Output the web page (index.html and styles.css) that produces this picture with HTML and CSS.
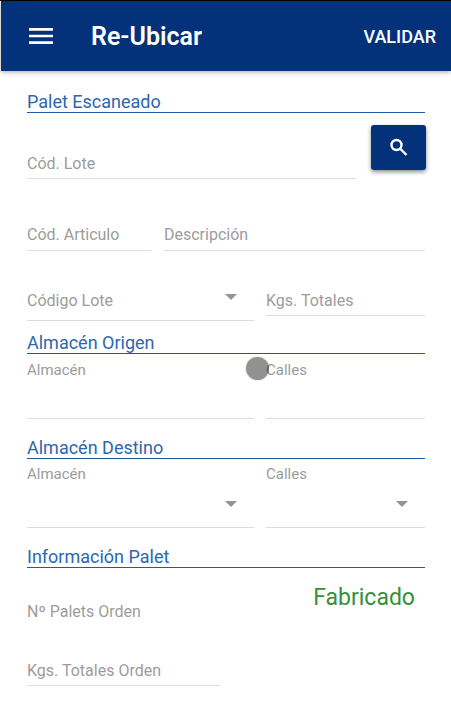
FILE: index.html
```html
<!DOCTYPE html>
<html lang="es">
<head>
  <meta charset="utf-8">
  <meta name="viewport" content="width=device-width, initial-scale=1">
  <title>Re-Ubicar</title>
  <link rel="stylesheet" href="styles.css">
</head>
<body>
  <header class="toolbar">
    <button class="menu-button" type="button" aria-label="Menú">
      <svg viewBox="0 0 24 24" width="32" height="32" fill="currentColor" aria-hidden="true"><path d="M3 18h18v-2H3v2zm0-5h18v-2H3v2zm0-7v2h18V6H3z"/></svg>
    </button>
    <h1 class="title">Re-Ubicar</h1>
    <button class="validate" type="button">VALIDAR</button>
  </header>

  <main class="content">
    <section>
      <h2 class="heading">Palet Escaneado</h2>
      <div class="row row-scan">
        <div class="field">
          <label for="cod-lote">Cód. Lote</label>
          <input id="cod-lote" type="text">
        </div>
        <button class="search" type="button" aria-label="Buscar">
          <svg viewBox="0 0 24 24" width="24" height="24" fill="none" stroke="currentColor" stroke-width="2.400" aria-hidden="true"><circle cx="9.500" cy="9" r="5"/><path d="M13 12.500l6.500 6.500"/></svg>
        </button>
      </div>
      <div class="row row-article">
        <div class="field">
          <label for="cod-articulo">Cód. Articulo</label>
          <input id="cod-articulo" type="text">
        </div>
        <div class="field">
          <label for="descripcion">Descripción</label>
          <input id="descripcion" type="text">
        </div>
      </div>
      <div class="row row-lot">
        <div class="field field-select">
          <label for="codigo-lote">Código Lote</label>
          <select id="codigo-lote"></select>
          <svg class="arrow" viewBox="0 0 12 6" width="12" height="6" aria-hidden="true"><path d="M0 0h12L6 6z"/></svg>
        </div>
        <div class="field">
          <label for="kgs-totales">Kgs. Totales</label>
          <input id="kgs-totales" type="text">
        </div>
      </div>
    </section>

    <section class="origin">
      <h2 class="heading">Almacén Origen</h2>
      <div class="row row-store">
        <div class="stacked">
          <label for="origen-almacen">Almacén</label>
          <input id="origen-almacen" type="text">
          <span class="touch"></span>
        </div>
        <div class="stacked">
          <label for="origen-calles">Calles</label>
          <input id="origen-calles" type="text">
        </div>
      </div>
    </section>

    <section class="target">
      <h2 class="heading">Almacén Destino</h2>
      <div class="row row-store">
        <div class="stacked stacked-select">
          <label for="destino-almacen">Almacén</label>
          <select id="destino-almacen"></select>
          <svg class="arrow" viewBox="0 0 12 6" width="12" height="6" aria-hidden="true"><path d="M0 0h12L6 6z"/></svg>
        </div>
        <div class="stacked stacked-select">
          <label for="destino-calles">Calles</label>
          <select id="destino-calles"></select>
          <svg class="arrow" viewBox="0 0 12 6" width="12" height="6" aria-hidden="true"><path d="M0 0h12L6 6z"/></svg>
        </div>
      </div>
    </section>

    <section class="info">
      <h2 class="heading">Información Palet</h2>
      <div class="row row-info">
        <div class="totals">
          <div class="field field-plain">
            <label for="palets-orden">Nº Palets Orden</label>
            <input id="palets-orden" type="text">
          </div>
          <div class="field">
            <label for="kgs-orden">Kgs. Totales Orden</label>
            <input id="kgs-orden" type="text">
          </div>
        </div>
        <p class="status">Fabricado</p>
      </div>
    </section>
  </main>
</body>
</html>
```

FILE: styles.css
```css
* {
  box-sizing: border-box;
}

body {
  margin: 0;
  background: #fff;
  border-top: 1px solid #000;
  font-family: Roboto, "Liberation Sans", sans-serif;
  color: #9c9c9c;
}

button,
input,
select {
  font: inherit;
  border: 0;
  padding: 0;
  margin: 0;
  background: none;
  color: inherit;
  border-radius: 0;
  appearance: none;
  min-width: 0;
}

button {
  cursor: pointer;
}

svg {
  display: block;
}

.toolbar {
  display: flex;
  align-items: center;
  height: 70px;
  margin-left: 1px;
  padding: 0 15px 0 24px;
  background: #03327b;
  color: #fff;
  box-shadow: 0 1px 5px rgba(60, 30, 30, 0.4);
}

.title {
  flex: 1;
  margin: 2px 0 0 34px;
  font-size: 25px;
  line-height: 30px;
  font-weight: 600;
}

.validate {
  margin-top: 2px;
  font-size: 18px;
  line-height: 24px;
  font-weight: 500;
}

.content {
  padding: 21px 26px 24px 27px;
}

.heading {
  margin: 0;
  border-bottom: 1px solid #1f5ba3;
  font-size: 18px;
  line-height: 20px;
  font-weight: 400;
  color: #2d67ae;
}

.row {
  display: grid;
  column-gap: 12px;
}

.field {
  display: grid;
  align-items: start;
  font-size: 16px;
  line-height: 20px;
}

.field > * {
  grid-area: 1 / 1;
}

.field input,
.field select {
  width: 100%;
  height: 25px;
  border-bottom: 1px solid #dcdcdc;
}

.field-select select {
  height: 30px;
}

.field-plain input {
  border-bottom-color: transparent;
}

.arrow {
  justify-self: end;
  margin-right: 17px;
  fill: #949494;
  pointer-events: none;
}

.field .arrow {
  margin-top: 3px;
}

.row-scan {
  grid-template-columns: 1fr 54px;
  column-gap: 15px;
  padding-top: 12px;
}

.row-scan .field {
  padding-top: 29px;
}

.search {
  display: flex;
  align-items: center;
  justify-content: center;
  width: 55px;
  height: 45px;
  border-radius: 3px;
  background: #03327b;
  color: #fff;
  box-shadow: 0 2px 4px rgba(0, 0, 0, 0.45);
}

.row-article {
  grid-template-columns: 124fr 261fr;
  column-gap: 13px;
  margin-top: 46px;
}

.row-article .field input {
  height: 26px;
}

.row-lot,
.row-store {
  grid-template-columns: 227fr 159fr;
}

.row-lot {
  align-items: start;
  margin-top: 40px;
}

.origin {
  margin-top: 12px;
}

.target,
.info {
  margin-top: 19px;
}

.row-store {
  padding-top: 7px;
}

.target .row-store {
  padding-top: 6px;
}

.stacked {
  position: relative;
  display: grid;
  font-size: 15px;
  line-height: 18px;
}

.stacked input,
.stacked select {
  grid-area: 2 / 1;
  width: 100%;
  height: 40px;
  border-bottom: 1px solid #dcdcdc;
}

.stacked-select select {
  height: 45px;
}

.stacked .arrow {
  grid-area: 2 / 1;
  margin-top: 18px;
}

/* Touch indicator, drawn over the two columns */
.touch {
  position: absolute;
  top: -4px;
  right: -15px;
  z-index: 1;
  width: 23px;
  height: 23px;
  border-radius: 50%;
  background: rgba(0, 0, 0, 0.43);
  box-shadow: 0 0 2px rgba(0, 0, 0, 0.25);
  pointer-events: none;
}

.row-info {
  grid-template-columns: 193fr 205fr;
  column-gap: 0;
  align-items: start;
}

.totals {
  display: grid;
  row-gap: 34px;
  padding-top: 34px;
}

.status {
  margin: 0;
  padding: 16px 10px 0 0;
  font-size: 23px;
  line-height: 28px;
  text-align: right;
  color: #388e3c;
}
```
